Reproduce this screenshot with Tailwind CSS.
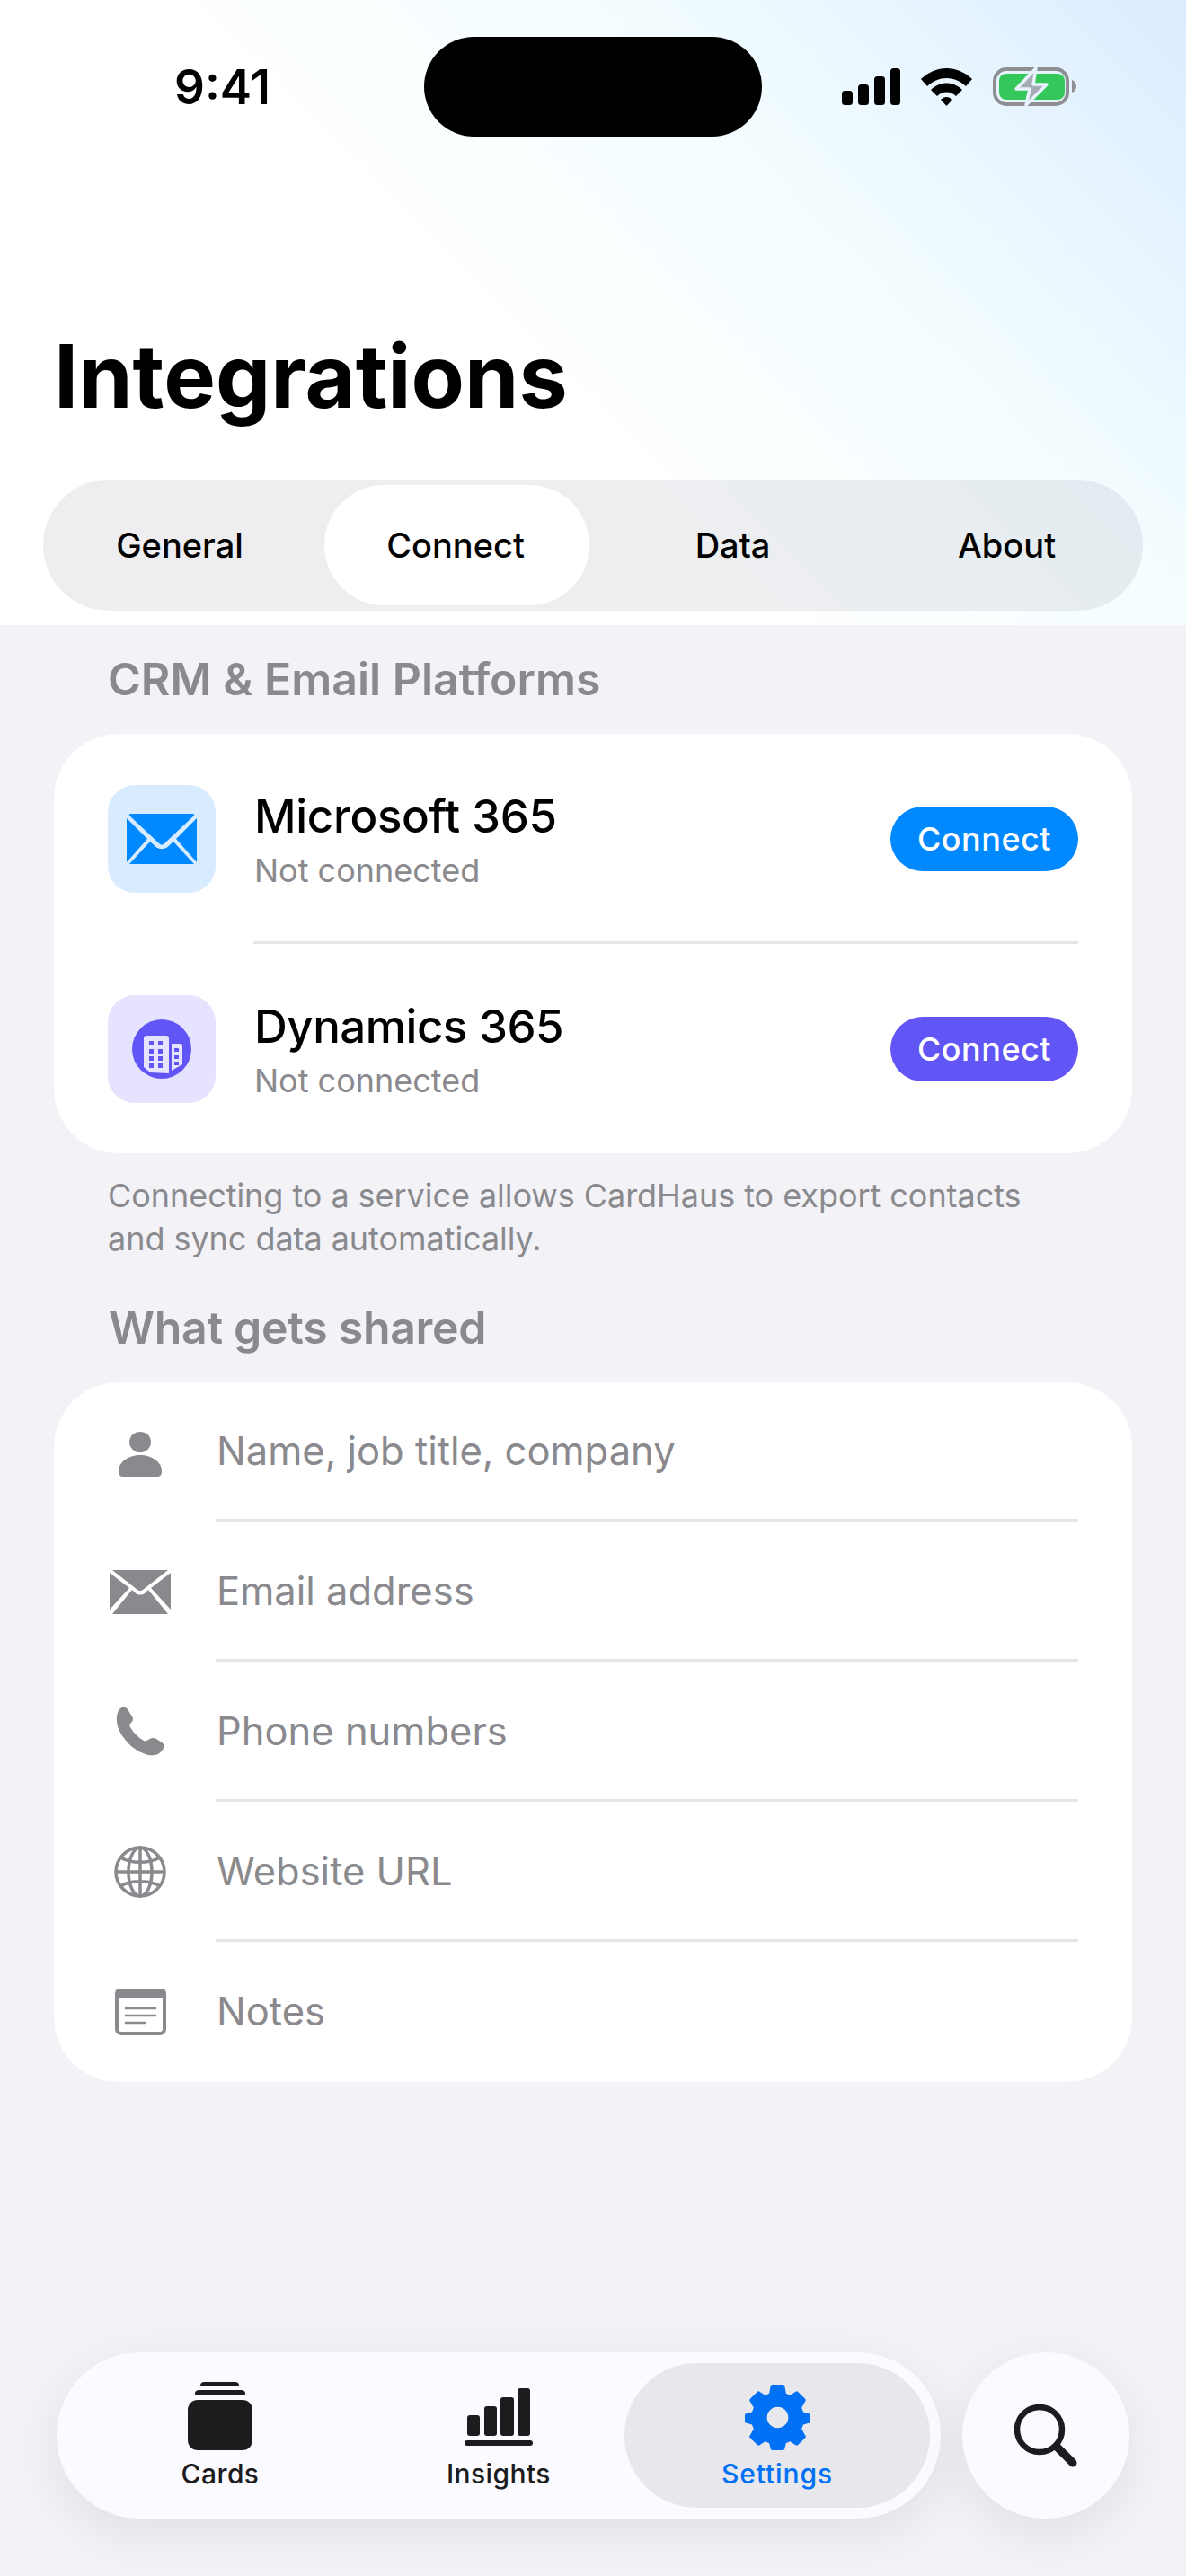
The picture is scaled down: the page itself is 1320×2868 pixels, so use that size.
<!DOCTYPE html>
<html><head><meta charset="utf-8"><script src="https://cdn.jsdelivr.net/npm/@tailwindcss/browser@4"></script></head>
<body class="m-0">
<div class="relative w-[1320px] h-[2868px] overflow-hidden bg-[#f2f2f7] font-['Inter','Liberation_Sans',sans-serif] text-black">
  <header class="h-[696px] bg-[linear-gradient(225deg,#dcecff_0%,#f3fdff_32%,#ffffff_58%,#ffffff_100%)] flex flex-col">
    <div class="relative h-[200px] shrink-0">
      <div class="absolute left-[194px] top-[67px] text-[53px] leading-[60px] font-semibold">9:41</div>
      <div class="absolute left-[472px] top-[41px] w-[376px] h-[111px] rounded-[56px] bg-black"></div>
      <svg class="absolute left-[936px] top-[74px]" width="268" height="46" viewBox="0 0 268 46">
        <g transform="translate(0 2)"><rect x="1" y="25" width="12" height="16" rx="3.500"/><rect x="19" y="18" width="12" height="23" rx="3.500"/><rect x="37" y="9" width="12" height="32" rx="3.500"/><rect x="55" y="0" width="11" height="41" rx="3.500"/>
        <path d="M89 12C106-4 129-4 146 12L139 20C126 8 109 8 96 20Z"/><path d="M100 24C110 14 125 14 135 24L128 31C122 25 113 25 107 31Z"/><path d="M111 35C115 31 120 31 124 35L117.500 42Z"/></g>
        <rect x="171" y="3" width="81" height="39" rx="13" fill="none" stroke="#8e8e93" stroke-width="4"/>
        <rect x="176" y="8" width="73" height="29" rx="8" fill="#34c759"/>
        <path d="M257 15C260 16 262 19 262 22C262 25 260 28 257 29Z" fill="#8e8e93"/>
        <path d="M217 2L195 25H210L206 43L229 20H214Z" fill="#a5abb2" stroke="#e7f2fe" stroke-width="3.500" stroke-linejoin="round"/>
      </svg>
    </div>
    <h1 class="ml-[60px] mt-[163px] text-[97px] leading-[112px] font-bold">Integrations</h1>
    <nav class="mx-[48px] mt-[59px] h-[146px] rounded-[73px] bg-[#767680]/12 p-[6px] grid grid-cols-4 text-[38px] font-medium">
      <div class="flex items-center justify-center pl-[11px] pr-[22px] pt-[1px]">General</div>
      <div class="flex items-center justify-center bg-white rounded-[68px] mx-[4px] pr-[3px] pt-[1px]">Connect</div>
      <div class="flex items-center justify-center pl-[8px] pt-[1px]">Data</div>
      <div class="flex items-center justify-center pl-[12px] pt-[1px]">About</div>
    </nav>
  </header>
  <main class="px-[60px]">
    <h2 class="ml-[60px] mt-[31px] text-[50px] leading-[58px] font-semibold text-[#8a8a8e]">CRM &amp; Email Platforms</h2>
    <section class="mt-[32px] h-[467px] rounded-[72px] bg-white px-[60px]">
      <div class="h-[231px] flex items-center">
        <div class="w-[120px] h-[120px] rounded-[30px] bg-[#d9ecff] flex items-center justify-center mt-[2px]">
          <svg width="78" height="56" viewBox="0 0 78 56" fill="#0088ff"><path d="M5 0H73Q76 0 75 2L42 33Q39 36 36 33L3 2Q2 0 5 0Z"/><path d="M0 5L23 28L0 54Z"/><path d="M78 5V54L55 28Z"/><path d="M26 31L33 37.500Q39 41 45 37.500L52 31L75 56H3Z"/></svg>
        </div>
        <div class="ml-[43px] flex-1 mt-[5px]">
          <div class="text-[51px] leading-[60px] font-medium tracking-[-0.3px]">Microsoft 365</div>
          <div class="mt-[8px] text-[36px] leading-[44px] text-[#8a8a8e]">Not connected</div>
        </div>
        <button class="w-[209px] h-[72px] rounded-[36px] bg-[#0088ff] text-white text-[36px] font-medium tracking-[0.5px] mt-[3px]">Connect</button>
      </div>
      <div class="h-[236px] flex items-center relative">
        <div class="absolute top-0 left-[162px] right-0 h-[3px] bg-[#e5e5ea]"></div>
        <div class="w-[120px] h-[120px] rounded-[30px] bg-[#e5e3fd] flex items-center justify-center mt-[4px]">
          <svg width="66" height="66" viewBox="0 0 66 66"><circle cx="33" cy="33" r="33" fill="#6155f5"/><path d="M13 21C13 19 14 18 16 18H38C40 18 41 19 41 21V60L20 59L13 53Z" fill="#e5e3fd"/><path d="M44 27H54C55 27 56 28 56 29V50L44 57Z" fill="#e5e3fd"/><g fill="#6155f5"><rect x="19" y="24" width="5" height="5"/><rect x="29" y="24" width="5" height="5"/><rect x="19" y="33" width="5" height="5"/><rect x="29" y="33" width="5" height="5"/><rect x="19" y="41" width="5" height="5"/><rect x="29" y="41" width="5" height="5"/><rect x="19" y="49" width="5" height="5"/><rect x="29" y="49" width="5" height="5"/><rect x="47" y="32" width="5" height="4"/><rect x="47" y="40" width="5" height="4"/><rect x="47" y="47" width="5" height="4"/></g></svg>
        </div>
        <div class="ml-[43px] flex-1 mt-[5px]">
          <div class="text-[51px] leading-[60px] font-medium tracking-[-0.5px]">Dynamics 365</div>
          <div class="mt-[8px] text-[36px] leading-[44px] text-[#8a8a8e]">Not connected</div>
        </div>
        <button class="w-[209px] h-[72px] rounded-[36px] bg-[#6155f5] text-white text-[36px] font-medium tracking-[0.5px] mt-[4px]">Connect</button>
      </div>
    </section>
    <p class="ml-[60px] mt-[23px] text-[36px] leading-[48px] text-[#8a8a8e] w-[1060px] tracking-[-0.05px]">Connecting to a service allows CardHaus to export contacts and sync data automatically.</p>
    <h2 class="ml-[61px] mt-[46px] text-[50px] leading-[58px] font-semibold tracking-[-0.3px] text-[#8a8a8e]">What gets shared</h2>
    <section class="mt-[32px] rounded-[72px] bg-white px-[60px]">
      <div class="h-[155px] flex items-center"><div class="w-[72px] mr-[48px] flex justify-center pt-[4px]"><svg width="48" height="50" viewBox="0 0 48 50" fill="#8a8a8e"><ellipse cx="24" cy="11.500" rx="12" ry="11.500"/><path d="M0 44C0 33 12 26 24 26C36 26 48 33 48 44C48 48 46 50 43 50H5C2 50 0 48 0 44Z"/></svg></div><div class="flex-1 h-full border-b-[3px] border-[#e5e5ea] flex items-center pl-[1px] pt-[2px] text-[43.500px] text-[#8a8a8e]">Name, job title, company</div></div>
      <div class="h-[156px] flex items-center"><div class="w-[72px] mr-[48px] flex justify-center"><svg width="68" height="49" viewBox="0 0 68 49" fill="#8a8a8e"><path d="M3 0H65L37 22C35 23.500 33 23.500 31 22Z"/><path d="M0 3L22 20L0 44Z"/><path d="M68 3V44L46 20Z"/><path d="M25 22L29 26C32 28 36 28 39 26L43 22L65 49H3Z"/></svg></div><div class="flex-1 h-full border-b-[3px] border-[#e5e5ea] flex items-center pl-[1px] pt-[2px] text-[43.500px] text-[#8a8a8e]">Email address</div></div>
      <div class="h-[156px] flex items-center"><div class="w-[72px] mr-[48px] flex justify-center"><svg width="54" height="54" viewBox="0 0 54 54" fill="#8a8a8e"><path d="M4 2C7-1 11-1 13 2L18 10C20 13 19 15 16 18C15 19 15 20 16 22C20 29 26 34 31 37C33 38 34 37 36 36C39 34 41 33 45 35L51 39C54 41 54 44 52 47C48 53 43 54 36 53C24 50 10 40 3 24C0 16 0 7 4 2Z"/></svg></div><div class="flex-1 h-full border-b-[3px] border-[#e5e5ea] flex items-center pl-[1px] pt-[2px] text-[43.500px] text-[#8a8a8e]">Phone numbers</div></div>
      <div class="h-[156px] flex items-center"><div class="w-[72px] mr-[48px] flex justify-center"><svg width="60" height="60" viewBox="0 0 60 60" fill="none" stroke="#8a8a8e" stroke-width="3.500"><circle cx="30" cy="30" r="27"/><ellipse cx="30" cy="30" rx="13" ry="27"/><path d="M30 3V57M3 30H57M8 14C20 21 40 21 52 14M8 46C20 39 40 39 52 46"/></svg></div><div class="flex-1 h-full border-b-[3px] border-[#e5e5ea] flex items-center pl-[1px] pt-[2px] text-[43.500px] text-[#8a8a8e]">Website URL</div></div>
      <div class="h-[156px] flex items-center"><div class="w-[72px] mr-[48px] flex justify-center"><svg width="57" height="52" viewBox="0 0 57 52"><rect x="2" y="2" width="53" height="48" rx="5" fill="none" stroke="#8a8a8e" stroke-width="4"/><path d="M6 0H51C55 0 57 2 57 6V11H0V6C0 2 2 0 6 0Z" fill="#8a8a8e"/><path d="M12 22H45M12 30H45M12 38H33" stroke="#8a8a8e" stroke-width="2.500" stroke-linecap="round"/></svg></div><div class="flex-1 h-full flex items-center pl-[1px] text-[43.500px] text-[#8a8a8e]">Notes</div></div>
    </section>
  </main>
  <div class="absolute left-[63px] top-[2619px] w-[984px] h-[185px] rounded-[93px] bg-[#fafaff] shadow-[0_16px_60px_rgba(0,0,0,0.08)] flex items-stretch text-[30px] font-medium tracking-[0.4px] text-[#1c1c1e] p-[12px]">
    <div class="w-[340px] flex flex-col items-center pt-[21px]">
      <svg width="72" height="76" viewBox="0 0 72 76" fill="#1c1c1e"><path d="M14 4C14 1 16 0 18 0H53C55 0 57 1 57 4V5H14Z"/><path d="M8 13C8 10 10 9 13 9H59C62 9 64 10 64 13V14H8Z"/><rect y="20" width="72" height="56" rx="11"/></svg>
      <span class="mt-[8px] leading-[36px]">Cards</span>
    </div>
    <div class="w-[280px] flex flex-col items-center pt-[21px]">
      <svg width="76" height="76" viewBox="0 0 76 76" fill="#1c1c1e"><rect x="3" y="37" width="14" height="23" rx="3"/><rect x="22" y="27" width="14" height="33" rx="3"/><rect x="40" y="17" width="15" height="43" rx="3"/><rect x="59" y="7" width="14" height="53" rx="3"/><rect y="65" width="76" height="6" rx="3"/></svg>
      <span class="mt-[8px] leading-[36px]">Insights</span>
    </div>
    <div class="w-[340px] rounded-[81px] bg-[#e7e7ec] flex flex-col items-center pt-[24px] text-[#0070f5]">
      <svg width="73" height="73" viewBox="0 1 74 74" fill="#0070f5"><path fill-rule="evenodd" d="M31 1H43C44 1 45 2 45 3L46.500 11C48 12 49 12 51 13L57 9C58 8 59 8 60 9L68 17C69 18 69 19 68 20L64 27C65 29 65 30 66 32L73 34C74 34 74 35 74 36V42C74 43 74 44 73 44L66 46C65 48 65 49 64 51L68 58C69 59 69 60 68 61L60 69C59 70 58 70 57 69L51 65C49 66 48 66 46.500 67L45 73C45 74 44 75 43 75H31C30 75 29 74 29 73L27.500 67C26 66 25 66 23 65L17 69C16 70 15 70 14 69L6 61C5 60 5 59 6 58L10 51C9 49 9 48 8 46L1 44C0 44 0 43 0 42V36C0 35 0 34 1 34L8 32C9 30 9 29 10 27L6 20C5 19 5 18 6 17L14 9C15 8 16 8 17 9L23 13C25 12 26 12 27.500 11L29 3C29 2 30 1 31 1ZM37 26A12 12 0 1 0 37 50A12 12 0 1 0 37 26Z"/></svg>
      <span class="mt-[8px] leading-[36px] tracking-[0.9px]">Settings</span>
    </div>
  </div>
  <div class="absolute left-[1071px] top-[2619px] w-[186px] h-[185px] rounded-full bg-[#fafaff] shadow-[0_16px_60px_rgba(0,0,0,0.08)] flex items-center justify-center">
    <svg width="70" height="70" viewBox="0 0 70 70" fill="none" stroke="#1c1c1e" stroke-linecap="round"><circle cx="28" cy="28" r="25" stroke-width="6.500"/><path d="M47 47L65 65" stroke-width="9"/></svg>
  </div>
</div>
</body></html>
